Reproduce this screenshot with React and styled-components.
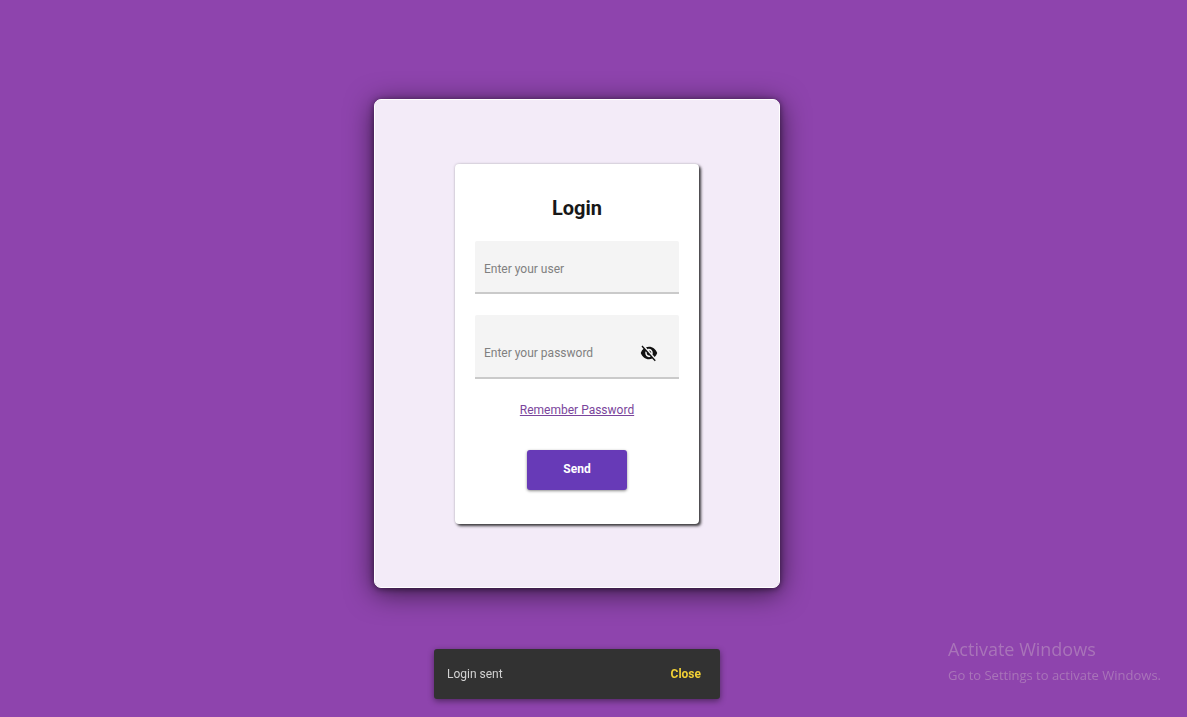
import React, { useState } from "react";
import styled, { createGlobalStyle } from "styled-components";

const GlobalStyle = createGlobalStyle`
  *, *::before, *::after { box-sizing: border-box; }
  body {
    margin: 0;
    background: #8e44ad;
    font-family: Roboto, "Liberation Sans", sans-serif;
  }
  h1, p { margin: 0; }
  input, button { font-family: inherit; }
`;

const Page = styled.main`
  min-height: 100vh;
  display: flex;
  align-items: center;
  justify-content: center;
  padding: 0 33px 30px 0;
`;

const Panel = styled.section`
  flex: 0 1 406px;
  display: flex;
  justify-content: center;
  padding: 64px 0 63px;
  background: #f3ebf8;
  border: 1px solid #fff;
  border-radius: 7px;
  box-shadow: 0 1px 6px rgba(0, 0, 0, 0.5), 0 5px 28px rgba(0, 0, 0, 0.6);
`;

const Card = styled.form`
  width: 244px;
  max-width: 100%;
  display: flex;
  flex-direction: column;
  align-items: center;
  padding: 30px 20px 34px;
  background: #fff;
  border-radius: 4px;
  box-shadow: 2px 2px 3px rgba(0, 0, 0, 0.75), 0 0 3px rgba(0, 0, 0, 0.2);
`;

const Title = styled.h1`
  margin-bottom: 19px;
  color: #181818;
  font-size: 20px;
  line-height: 28px;
  font-weight: 700;
`;

const Field = styled.div`
  align-self: stretch;
  display: flex;
  align-items: center;
  height: ${({ $tall }) => ($tall ? "64px" : "53px")};
  padding: ${({ $tall }) => ($tall ? "14px 21px 0 9px" : "4px 9px 0")};
  margin-bottom: 21px;
  background: #f4f4f4;
  border-bottom: 2px solid #cacaca;
  border-radius: 2px 2px 0 0;
`;

const TextInput = styled.input`
  flex: 1;
  min-width: 0;
  padding: 0;
  border: 0;
  outline: 0;
  background: transparent;
  color: #333;
  font-size: 12px;
  line-height: 20px;
  &::placeholder { color: #808080; opacity: 1; }
`;

const IconButton = styled.button`
  display: flex;
  padding: 0;
  border: 0;
  background: transparent;
  color: #111;
  cursor: pointer;
`;

const RememberLink = styled.a`
  margin-bottom: 30px;
  color: #7a459c;
  font-size: 12px;
  line-height: 20px;
`;

const SendButton = styled.button`
  width: 100px;
  height: 40px;
  padding: 0 0 2px;
  border: 0;
  border-radius: 3px;
  background: #673ab7;
  color: #fff;
  font-size: 12px;
  font-weight: 700;
  box-shadow: 0 1px 3px rgba(0, 0, 0, 0.45);
  cursor: pointer;
`;

const SnackbarLayer = styled.div`
  position: fixed;
  left: 0;
  right: 0;
  bottom: 18px;
  display: flex;
  justify-content: center;
  padding-right: 33px;
  pointer-events: none;
`;

const Snackbar = styled.div`
  flex: 0 1 286px;
  display: flex;
  align-items: center;
  justify-content: space-between;
  padding: 15px 19px 15px 13px;
  background: #323232;
  border-radius: 3px;
  color: #d2d2d2;
  font-size: 12px;
  line-height: 20px;
  box-shadow: 0 2px 6px rgba(0, 0, 0, 0.45);
  pointer-events: auto;
`;

const SnackbarAction = styled.button`
  padding: 0;
  border: 0;
  background: transparent;
  color: #f0cf35;
  font-size: 12px;
  line-height: 20px;
  font-weight: 700;
  cursor: pointer;
`;

const Watermark = styled.aside`
  position: fixed;
  right: 26px;
  bottom: 30px;
  color: #a974b9;
  font-family: "Open Sans", "Noto Sans", sans-serif;
  pointer-events: none;
`;

const WatermarkTitle = styled.p`
  font-size: 18px;
  line-height: 28px;
`;

const WatermarkText = styled.p`
  font-size: 13px;
  line-height: 24px;
`;

function EyeOffIcon() {
  return (
    <svg width="18" height="20" viewBox="0 0 24 24" fill="currentColor" preserveAspectRatio="none" aria-hidden="true">
      <path d="M12 7c2.76 0 5 2.24 5 5 0 .65-.13 1.26-.36 1.83l2.92 2.92c1.51-1.26 2.7-2.89 3.43-4.75-1.73-4.39-6-7.5-11-7.5-1.4 0-2.74.25-3.98.7l2.16 2.16C10.74 7.13 11.35 7 12 7zM2 4.27l2.28 2.28.46.46C3.08 8.3 1.78 10.02 1 12c1.73 4.39 6 7.5 11 7.5 1.55 0 3.03-.3 4.38-.84l.42.42L19.73 22 21 20.73 3.27 3 2 4.27zM7.53 9.8l1.55 1.55c-.05.21-.08.43-.08.65 0 1.66 1.34 3 3 3 .22 0 .44-.03.65-.08l1.55 1.55c-.67.33-1.41.53-2.2.53-2.76 0-5-2.24-5-5 0-.79.2-1.53.53-2.2zm4.31-.78l3.15 3.15.02-.16c0-1.66-1.34-3-3-3l-.17.01z" />
    </svg>
  );
}

export default function App() {
  const [visible, setVisible] = useState(false);
  const [open, setOpen] = useState(true);

  const submit = (event) => {
    event.preventDefault();
    setOpen(true);
  };

  return (
    <>
      <GlobalStyle />
      <Page>
        <Panel>
          <Card onSubmit={submit}>
            <Title>Login</Title>
            <Field>
              <TextInput type="text" aria-label="Enter your user" placeholder="Enter your user" />
            </Field>
            <Field $tall>
              <TextInput
                type={visible ? "text" : "password"}
                aria-label="Enter your password"
                placeholder="Enter your password"
              />
              <IconButton type="button" aria-label="Toggle password visibility" onClick={() => setVisible(!visible)}>
                <EyeOffIcon />
              </IconButton>
            </Field>
            <RememberLink href="#remember">Remember Password</RememberLink>
            <SendButton type="submit">Send</SendButton>
          </Card>
        </Panel>
      </Page>
      {open && (
        <SnackbarLayer>
          <Snackbar role="status">
            <span>Login sent</span>
            <SnackbarAction type="button" onClick={() => setOpen(false)}>Close</SnackbarAction>
          </Snackbar>
        </SnackbarLayer>
      )}
      <Watermark>
        <WatermarkTitle>Activate Windows</WatermarkTitle>
        <WatermarkText>Go to Settings to activate Windows.</WatermarkText>
      </Watermark>
    </>
  );
}
